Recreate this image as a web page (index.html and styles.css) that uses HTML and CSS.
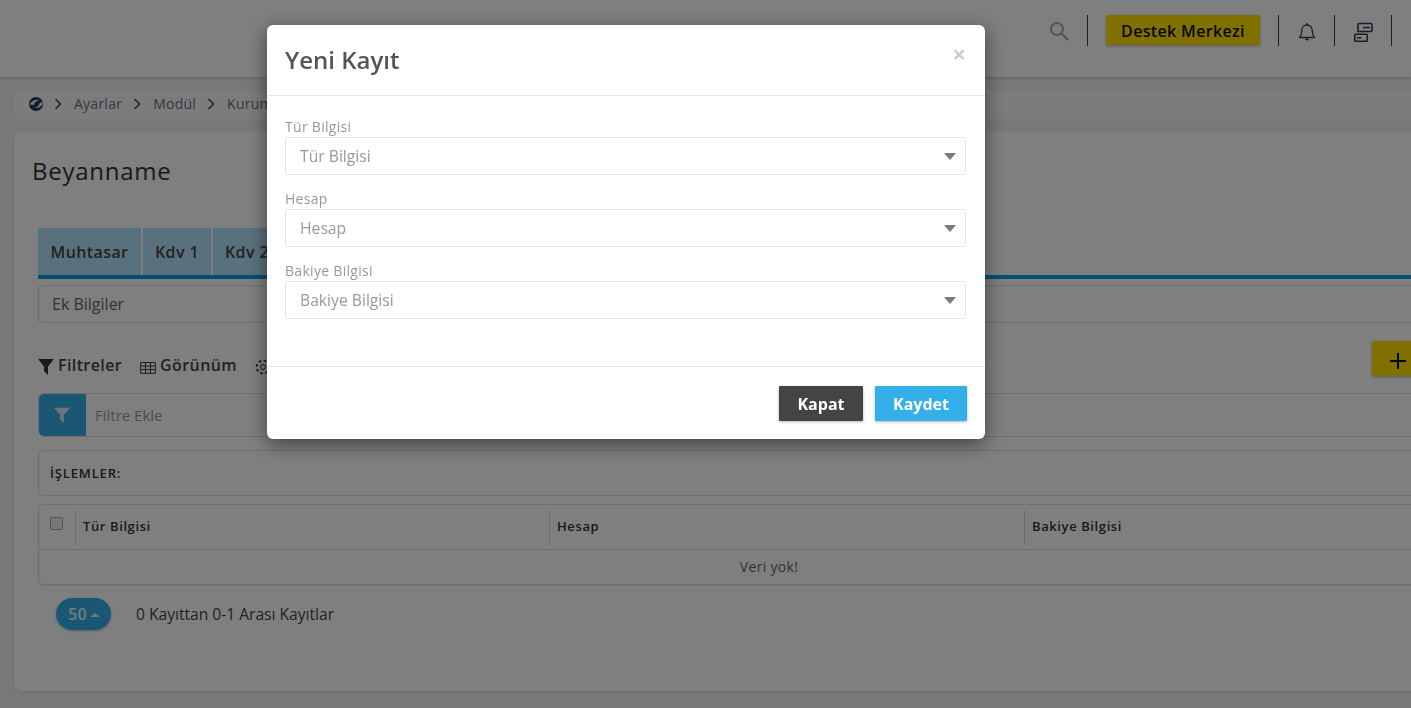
FILE: index.html
```html
<!DOCTYPE html>
<html lang="tr">
<head>
<meta charset="utf-8">
<title>Beyanname</title>
<link rel="stylesheet" href="styles.css">
</head>
<body>
<div class="page">
  <header class="topbar">
    <svg class="ico-search" viewBox="0 0 20 20" width="20" height="20"><circle cx="8" cy="8" r="6" fill="none" stroke="#aaa" stroke-width="2"/><path d="M12.500 12.500L18.500 18.500" stroke="#aaa" stroke-width="2.400" stroke-linecap="round"/></svg>
    <span class="vline"></span>
    <span class="help">Destek Merkezi</span>
    <span class="vline"></span>
    <svg class="ico-bell" viewBox="0 0 20 20" width="20" height="20"><path d="M2.500 15.500c1.500-1.500 2.200-3 2.200-6.500C4.700 5.500 7 3 10 3s5.300 2.500 5.300 6c0 3.500.7 5 2.200 6.500z" fill="none" stroke="#343d4c" stroke-width="1.300" stroke-linejoin="round"/><path d="M10 1v2" stroke="#343d4c" stroke-width="1.300"/><path d="M8 16.500a2 2 0 0 0 4 0z" fill="#343d4c"/></svg>
    <span class="vline"></span>
    <svg class="ico-panels" viewBox="0 0 20 20" width="20" height="20"><path d="M5 9.500V2.500a1 1 0 0 1 1-1h12a1 1 0 0 1 1 1v6a1 1 0 0 1-1 1zM10 5.500h7" fill="none" stroke="#343d4c" stroke-width="1.600"/><rect x="1.800" y="12.300" width="12.400" height="7" rx=".8" fill="none" stroke="#343d4c" stroke-width="1.600"/><path d="M4 15.800h4.500" stroke="#343d4c" stroke-width="1.600"/></svg>
    <span class="vline"></span>
  </header>

  <nav class="crumbs">
    <svg class="logo" viewBox="0 0 16 16" width="14" height="14"><circle cx="8" cy="8" r="8" fill="#1f3a5c"/><path d="M.5 9C2.500 4.500 7.500 2 12.500 3.500 9 4 6.500 5.500 5.500 9.500 4 8.500 2 8.500.5 9zM15.800 6.500C15.500 10 11 13.500 5.500 12.500 9 12 11.500 10 12 7c1.500-.8 2.500-.8 3.800-.5z" fill="#f3f5f8"/></svg>
    <svg class="chev" viewBox="0 0 8 12" width="8" height="12"><path d="M1.500 1l5 5-5 5" fill="none" stroke="#354257" stroke-width="1.500"/></svg>
    <span>Ayarlar</span>
    <svg class="chev" viewBox="0 0 8 12" width="8" height="12"><path d="M1.500 1l5 5-5 5" fill="none" stroke="#354257" stroke-width="1.500"/></svg>
    <span>Modül</span>
    <svg class="chev" viewBox="0 0 8 12" width="8" height="12"><path d="M1.500 1l5 5-5 5" fill="none" stroke="#354257" stroke-width="1.500"/></svg>
    <span>Kurum</span>
  </nav>

  <main class="card">
    <h1 class="title">Beyanname</h1>
    <div class="tabs">
      <span class="tab tab-first">Muhtasar</span>
      <span class="tab tab-kdv">Kdv 1</span>
      <span class="tab tab-kdv">Kdv 2</span>
    </div>
    <div class="extra">Ek Bilgiler</div>

    <div class="tools">
      <span class="tool tool-filter">
        <svg viewBox="0 0 16 17" width="16" height="17"><path d="M0 1h16L10 8.500V17L6 13V8.500z" fill="#343434"/></svg>
        Filtreler
      </span>
      <span class="tool tool-view">
        <svg viewBox="0 0 16 14" width="16" height="14"><path d="M.7 2.500h14.600v10.800H.7zM.7 6h14.600M.7 9.600h14.600M5.500 2.500v10.800M10.500 2.500v10.800" fill="none" stroke="#343434" stroke-width="1"/></svg>
        Görünüm
      </span>
      <span class="tool tool-gear">
        <svg viewBox="0 0 16 16" width="16" height="16"><circle cx="8" cy="8" r="2.500" fill="none" stroke="#343434"/><circle cx="8" cy="8" r="6.400" fill="none" stroke="#343434" stroke-width="1.800" stroke-dasharray="2.500 2.500"/></svg>
      </span>
      <span class="add">
        <svg viewBox="0 0 16 16" width="16" height="16"><path d="M8 0v16M0 8h16" stroke="#000" stroke-width="2"/></svg>
      </span>
    </div>

    <div class="filterbar">
      <span class="filterbtn"><svg viewBox="0 0 20 20" width="18" height="18"><path d="M1 2h18l-7 8v9l-4-4v-5z" fill="#d9e8f2"/></svg></span>
      <span class="filterph">Filtre Ekle</span>
    </div>

    <div class="ops">İŞLEMLER:</div>

    <div class="grid">
      <div class="grid-head">
        <span class="chk-cell"><span class="chk"></span></span>
        <span class="col col-1">Tür Bilgisi</span>
        <span class="col">Hesap</span>
        <span class="col">Bakiye Bilgisi</span>
      </div>
      <div class="grid-empty">Veri yok!</div>
    </div>

    <div class="pager">
      <span class="size">50<i class="caret"></i></span>
      <span class="count">0 Kayıttan 0-1 Arası Kayıtlar</span>
    </div>
  </main>
</div>

<div class="overlay"></div>

<section class="modal">
  <div class="modal-head">
    <h2>Yeni Kayıt</h2>
    <span class="close">×</span>
  </div>
  <div class="modal-body">
    <div class="field">
      <label>Tür Bilgisi</label>
      <div class="select"><span>Tür Bilgisi</span><i class="arrow"></i></div>
    </div>
    <div class="field">
      <label>Hesap</label>
      <div class="select"><span>Hesap</span><i class="arrow"></i></div>
    </div>
    <div class="field">
      <label>Bakiye Bilgisi</label>
      <div class="select"><span>Bakiye Bilgisi</span><i class="arrow"></i></div>
    </div>
  </div>
  <div class="modal-foot">
    <button class="btn btn-dark">Kapat</button>
    <button class="btn btn-blue">Kaydet</button>
  </div>
</section>
</body>
</html>
```
FILE: styles.css
```css
* { box-sizing: border-box; }
html, body { margin: 0; height: 100%; overflow: hidden; }
body {
  font-family: "Open Sans", "Liberation Sans", sans-serif;
  background: #eff1f4;
  color: #333;
}
.page { width: 1411px; height: 708px; overflow: hidden; }

.topbar {
  height: 77px;
  background: #fff;
  display: flex;
  align-items: flex-start;
  justify-content: flex-end;
  padding: 15px 19px 0 0;
  box-shadow: 0 1px 3px rgba(0,0,0,.2);
  position: relative;
}
.vline { width: 1px; height: 31px; background: #333b4a; }
.ico-search { margin: 6px 18px 0 0; }
.ico-bell { margin: 7px 17px 0 18px; }
.ico-panels { margin: 7px 18px 0 18px; }
.help {
  margin: 0 18px;
  width: 154px;
  height: 30px;
  background: #ffe000;
  color: #111;
  font-size: 16px;
  font-weight: 600;
  letter-spacing: .35px;
  line-height: 32px;
  text-align: center;
  box-shadow: 0 1px 3px rgba(0,0,0,.3);
  border-radius: 1px;
}

.crumbs {
  margin: 13px 0 0 14px;
  height: 29px;
  width: 1800px;
  display: flex;
  align-items: center;
  padding: 0 0 2px 15px;
  background: #f8f9fb;
  border-radius: 6px;
  color: #677080;
  font-size: 14px;
  letter-spacing: .25px;
}
.logo { margin-right: 11px; }
.chev { margin-right: 12px; }
.crumbs span { margin-right: 11px; }

.card {
  margin: 12px 0 0 14px;
  width: 1800px;
  height: 560px;
  background: #fff;
  border-radius: 8px;
  padding: 0 0 0 24px;
  box-shadow: 0 1px 3px rgba(0,0,0,.12);
}
.title {
  margin: 0 0 0 -6px;
  padding-top: 22px;
  font-size: 24px;
  font-weight: 400;
  line-height: 35px;
  height: 97px;
  color: #333;
  letter-spacing: .75px;
}
.tabs {
  display: flex;
  gap: 2px;
  height: 51px;
  border-bottom: 4px solid #00a0e6;
  width: 1776px;
}
.tab {
  height: 47px;
  background: #b3e2f8;
  font-size: 16px;
  font-weight: 600;
  letter-spacing: .4px;
  line-height: 49px;
  text-align: center;
  color: #444;
}
.tab-first { width: 103px; }
.tab-kdv { width: 68px; }
.extra {
  margin-top: 6px;
  height: 38px;
  width: 1776px;
  border: 1px solid #ddd;
  border-radius: 3px;
  padding-left: 13px;
  font-size: 16px;
  line-height: 36px;
  color: #666;
}

.tools {
  margin-top: 23px;
  height: 48px;
  width: 1776px;
  display: flex;
  align-items: flex-start;
  position: relative;
  font-size: 16px;
  font-weight: 600;
  letter-spacing: .4px;
  color: #444;
}
.tool { display: flex; align-items: center; gap: 4px; height: 38px; line-height: 38px; }
.tool-filter { margin-right: 18px; }
.tool-filter svg { margin-top: 3px; }
.tool-view { margin-right: 18px; }
.tool-view svg { margin-top: 3px; }
.tool-gear svg { margin-top: 4px; }
.add {
  position: absolute;
  left: 1334px;
  top: -5px;
  width: 60px;
  height: 35px;
  background: #ffe000;
  box-shadow: 0 1px 3px rgba(0,0,0,.3);
  padding: 12px 0 0 18px;
  display: flex;
  align-items: flex-start;
}

.filterbar {
  margin-top: -1px;
  height: 44px;
  width: 1776px;
  display: flex;
  align-items: stretch;
  border: 1px solid #ddd;
  border-radius: 6px;
  overflow: hidden;
}
.filterbtn {
  width: 48px;
  background: #35afe9;
  margin: -1px 0 -1px -1px;
  display: flex;
  align-items: center;
  justify-content: center;
}
.filterph { padding-left: 9px; font-size: 15px; line-height: 42px; color: #999; }

.ops {
  margin-top: 13px;
  height: 46px;
  width: 1776px;
  border: 1px solid #ddd;
  border-radius: 6px;
  padding-left: 11px;
  font-size: 13px;
  font-weight: 600;
  line-height: 45px;
  color: #333;
  letter-spacing: .85px;
}

.grid {
  margin-top: 8px;
  width: 1776px;
  height: 81px;
  border: 1px solid #ddd;
  border-radius: 6px;
  box-shadow: 0 1px 1px rgba(0,0,0,.1);
  font-size: 13px;
}
.grid-head {
  height: 45px;
  display: flex;
  align-items: flex-start;
  border-bottom: 1px solid #d8d8d8;
  padding-top: 5px;
  font-weight: 600;
  color: #333;
  letter-spacing: .6px;
}
.chk-cell { width: 36px; height: 35px; padding: 7px 0 0 11px; flex: none; }
.chk {
  display: block;
  width: 13px;
  height: 13px;
  background: #eee;
  border: 1px solid #aaa;
  border-radius: 2px;
}
.col {
  width: 475px;
  flex: none;
  height: 35px;
  line-height: 33px;
  padding-left: 7px;
  border-left: 1px solid #ddd;
}
.col-1 { width: 474px; }
.grid-empty {
  width: 1460px;
  height: 34px;
  line-height: 34px;
  text-align: center;
  color: #666;
  font-size: 14px;
  letter-spacing: .3px;
}

.pager {
  margin: 13px 0 0 18px;
  display: flex;
  align-items: center;
  height: 32px;
}
.size {
  width: 55px;
  height: 32px;
  border-radius: 16px;
  background: #35afe9;
  color: #e8f6fd;
  font-size: 16px;
  font-weight: 600;
  line-height: 32px;
  padding-left: 12px;
  box-shadow: 0 1px 3px rgba(0,0,0,.25);
  display: flex;
  align-items: center;
  gap: 3px;
  letter-spacing: .4px;
}
.caret {
  width: 0;
  height: 0;
  border: 5px solid transparent;
  border-top: 0;
  border-bottom: 4px solid #e0f0fa;
  margin-top: 2px;
}
.count { margin-left: 25px; font-size: 15.6px; color: #444; }

.overlay { position: fixed; inset: 0; background: rgba(0,0,0,.5); }

.modal {
  position: fixed;
  left: 267px;
  top: 25px;
  width: 718px;
  height: 414px;
  background: #fff;
  border-radius: 6px;
  box-shadow: 0 5px 20px rgba(0,0,0,.5);
  display: flex;
  flex-direction: column;
}
.modal-head {
  height: 71px;
  border-bottom: 1px solid #e5e5e5;
  padding: 0 19px 0 18px;
  display: flex;
  justify-content: space-between;
  align-items: flex-start;
}
.modal-head h2 {
  margin: 17px 0 0;
  font-size: 24px;
  line-height: 36px;
  color: #555;
  font-weight: 600;
}
.close {
  margin: 14px 0 0 0;
  font-size: 24px;
  font-weight: 700;
  line-height: 30px;
  color: #ccc;
}
.modal-body {
  height: 271px;
  border-bottom: 1px solid #e5e5e5;
  padding: 21px 19px 0 18px;
  display: flex;
  flex-direction: column;
  gap: 14px;
}
.field { height: 58px; }
.field label {
  display: block;
  height: 20px;
  font-size: 14px;
  letter-spacing: .3px;
  line-height: 20px;
  color: #999;
}
.select {
  height: 38px;
  border: 1px solid #e4e4e4;
  border-radius: 3px;
  padding: 0 9px 0 14px;
  display: flex;
  align-items: center;
  justify-content: space-between;
  font-size: 15.7px;
  color: #999;
}
.arrow {
  width: 0;
  height: 0;
  border: 6px solid transparent;
  border-top: 7px solid #7a7a7a;
  border-bottom: 0;
  border-left-width: 6.5px;
  border-right-width: 6.5px;
}
.modal-foot {
  padding: 19px 18px 0 0;
  display: flex;
  justify-content: flex-end;
  gap: 12px;
}
.btn {
  height: 35px;
  border: 0;
  border-radius: 1px;
  font-family: inherit;
  font-size: 16px;
  font-weight: 700;
  color: #fff;
  box-shadow: 0 1px 3px rgba(0,0,0,.3);
  padding: 0;
}
.btn-dark { width: 84px; background: #444; }
.btn-blue { width: 92px; background: #35afea; }
```
